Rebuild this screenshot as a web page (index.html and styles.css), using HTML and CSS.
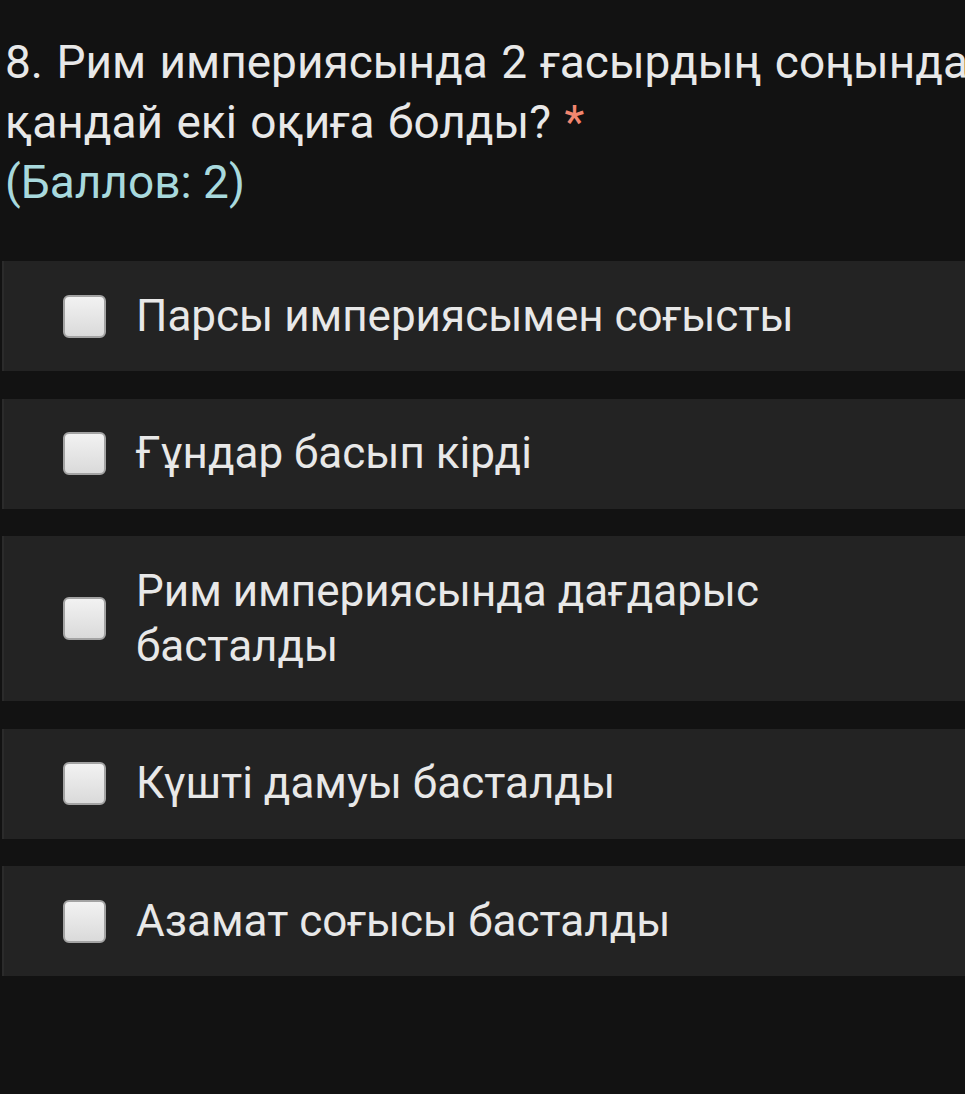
FILE: index.html
```html
<!DOCTYPE html>
<html lang="kk">
<head>
<meta charset="utf-8">
<title>Сұрақ 8</title>
<link rel="stylesheet" href="styles.css">
</head>
<body>
<div class="page">
  <div class="question">
    <div class="q-title">8. Рим империясында 2 ғасырдың соңында<br>қандай екі оқиға болды? <span class="req">*</span></div>
    <div class="points">(Баллов: 2)</div>
  </div>
  <div class="options">
    <label class="option"><span class="box"></span><span class="opt-text">Парсы империясымен соғысты</span></label>
    <label class="option"><span class="box"></span><span class="opt-text">Ғұндар басып кірді</span></label>
    <label class="option"><span class="box"></span><span class="opt-text">Рим империясында дағдарыс басталды</span></label>
    <label class="option"><span class="box"></span><span class="opt-text">Күшті дамуы басталды</span></label>
    <label class="option"><span class="box"></span><span class="opt-text">Азамат соғысы басталды</span></label>
  </div>
</div>
</body>
</html>
```

FILE: styles.css
```css
html, body {
  margin: 0;
  padding: 0;
  background: #121212;
  overflow: hidden;
}
.page {
  font-family: Roboto, "Noto Sans", sans-serif;
  color: #e8e8e8;
  width: 965px;
  height: 1094px;
  padding-top: 32px;
  box-sizing: border-box;
  overflow: hidden;
}
.question {
  padding-left: 5px;
  font-size: 46px;
  line-height: 60px;
}
.q-title {
  white-space: nowrap;
  word-spacing: 2px;
}
.req {
  color: #f2866f;
}
.points {
  color: #a8d9dd;
}
.options {
  margin-top: 49px;
  display: flex;
  flex-direction: column;
  gap: 27.5px;
  padding-left: 2px;
}
.option {
  display: flex;
  align-items: center;
  background: #232323;
  border-left: 2px solid #2b2b2b;
  box-sizing: border-box;
  padding: 27.5px 0 27.5px 59px;
  font-size: 44px;
  line-height: 55px;
}
.box {
  flex: 0 0 auto;
  width: 43px;
  height: 43px;
  box-sizing: border-box;
  border: 2px solid #a3a3a3;
  border-radius: 6px;
  background: linear-gradient(#f2f2f2, #dadada);
  margin-right: 30px;
}
.opt-text {
  width: 680px;
}
```
